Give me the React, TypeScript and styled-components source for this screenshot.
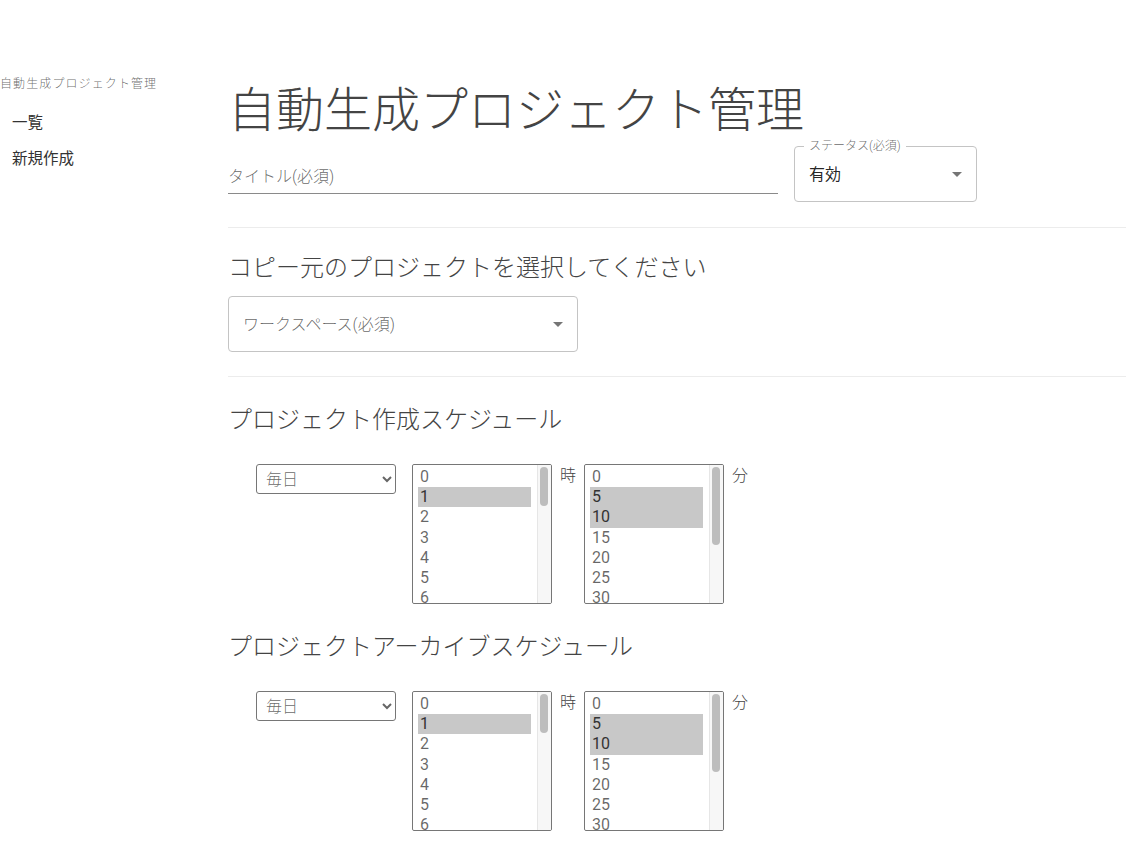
import styled, { createGlobalStyle } from "styled-components";

const GlobalStyle = createGlobalStyle`
  body {
    margin: 0;
    background: #fff;
    font-family: Roboto, "Noto Sans CJK JP", sans-serif;
    font-weight: 300;
    color: rgba(0, 0, 0, 0.87);
  }
`;

const hours = Array.from({ length: 24 }, (_, i) => String(i));
const minutes = Array.from({ length: 12 }, (_, i) => String(i * 5));

const ArrowDrop = () => (
  <svg width="24" height="24" viewBox="0 0 24 24">
    <path d="M7 10l5 5 5-5z" fill="rgba(0,0,0,0.54)" />
  </svg>
);

// 複数選択リスト。スクロールバーはヘッドレスだと出ないので自前で描く
const MultiList = ({ items, selected }: { items: string[]; selected: string[] }) => {
  const thumb = Math.round((7 / items.length) * 134);
  return (
    <ListFrame>
      <ListBox multiple size={7} defaultValue={selected}>
        {items.map((v) => (
          <option key={v} value={v}>
            {v}
          </option>
        ))}
      </ListBox>
      <ScrollTrack>
        <ScrollThumb style={{ height: thumb }} />
      </ScrollTrack>
    </ListFrame>
  );
};

const Schedule = ({ title }: { title: string }) => (
  <>
    <SectionTitle $top={27}>{title}</SectionTitle>
    <ScheduleRow>
      <Frequency defaultValue="daily">
        <option value="daily">毎日</option>
        <option value="weekly">毎週</option>
        <option value="monthly">毎月</option>
      </Frequency>
      <MultiList items={hours} selected={["1"]} />
      <Unit>時</Unit>
      <MultiList items={minutes} selected={["5", "10"]} />
      <Unit>分</Unit>
    </ScheduleRow>
  </>
);

const App = () => {
  return (
    <Page>
      <GlobalStyle />
      <Sidebar>
        <SideTitle>自動生成プロジェクト管理</SideTitle>
        <NavList>
          <NavItem>一覧</NavItem>
          <NavItem>新規作成</NavItem>
        </NavList>
      </Sidebar>
      <Main>
        <PageTitle>自動生成プロジェクト管理</PageTitle>
        <FormRow>
          <TextField>
            <Placeholder>タイトル(必須)</Placeholder>
          </TextField>
          <Outlined $width={183}>
            <FloatLabel>ステータス(必須)</FloatLabel>
            <SelectValue>有効</SelectValue>
            <ArrowDrop />
          </Outlined>
        </FormRow>
        <Divider $top={25} />
        <SectionTitle $top={24}>コピー元のプロジェクトを選択してください</SectionTitle>
        <Outlined $width={350} style={{ marginTop: 12 }}>
          <SelectValue $muted>ワークスペース(必須)</SelectValue>
          <ArrowDrop />
        </Outlined>
        <Divider $top={24} />
        <Schedule title="プロジェクト作成スケジュール" />
        <Schedule title="プロジェクトアーカイブスケジュール" />
      </Main>
    </Page>
  );
};

const Page = styled.div`
  display: flex;
  min-height: 844px;
`;

const Sidebar = styled.nav`
  width: 228px;
  flex-shrink: 0;
  padding-top: 76px;
`;

const SideTitle = styled.div`
  font-size: 12px;
  letter-spacing: 1.1px;
  color: rgba(0, 0, 0, 0.6);
  line-height: 16px;
`;

const NavList = styled.ul`
  list-style: none;
  margin: 13px 0 0;
  padding: 0;
`;

const NavItem = styled.li`
  padding: 6px 12px;
  font-size: 15.5px;
  font-weight: 400;
  line-height: 24px;
  color: #333;
`;

const Main = styled.main`
  flex: 1;
  padding-top: 81px;
  padding-bottom: 40px;
`;

const PageTitle = styled.h1`
  margin: 0;
  font-size: 48px;
  font-weight: 300;
  line-height: 60px;
  color: #444;
`;

const FormRow = styled.div`
  display: flex;
  align-items: flex-start;
  gap: 16px;
  margin-top: 5px;
`;

const TextField = styled.div`
  width: 550px;
  height: 48px;
  box-sizing: border-box;
  border-bottom: 1px solid #8a8a8a;
  display: flex;
  align-items: flex-end;
  padding-bottom: 5px;
`;

const Placeholder = styled.span`
  font-size: 16px;
  line-height: 23px;
  color: rgba(0, 0, 0, 0.6);
`;

const Outlined = styled.div<{ $width: number }>`
  position: relative;
  width: ${(p) => p.$width}px;
  height: 56px;
  box-sizing: border-box;
  border: 1px solid #c4c4c4;
  border-radius: 4px;
  display: flex;
  align-items: center;
  justify-content: space-between;
  padding: 0 7px 0 14px;
`;

const FloatLabel = styled.span`
  position: absolute;
  top: -9px;
  left: 9px;
  padding: 0 5px;
  background: #fff;
  font-size: 12px;
  line-height: 16px;
  color: rgba(0, 0, 0, 0.6);
`;

const SelectValue = styled.span<{ $muted?: boolean }>`
  font-size: 16px;
  font-weight: ${(p) => (p.$muted ? 300 : 400)};
  margin-top: -2px;
  color: ${(p) => (p.$muted ? "rgba(0, 0, 0, 0.6)" : "rgba(0, 0, 0, 0.87)")};
`;

const Divider = styled.hr<{ $top: number }>`
  margin: ${(p) => p.$top}px 0 0;
  border: none;
  border-top: 1px solid #ececec;
`;

const SectionTitle = styled.h2<{ $top: number }>`
  margin: ${(p) => p.$top}px 0 0;
  font-size: 24px;
  font-weight: 300;
  line-height: 32px;
  color: #444;
`;

const ScheduleRow = styled.div`
  display: flex;
  align-items: flex-start;
  gap: 8px;
  margin: 28px 0 0 28px;
`;

const Frequency = styled.select`
  width: 140px;
  height: 30px;
  margin-right: 8px;
  font-family: Roboto, "Noto Sans CJK JP", sans-serif;
  font-weight: 300;
  font-size: 16px;
  color: rgba(0, 0, 0, 0.6);
  background: #fff;
  border: 1px solid #767676;
  border-radius: 3px;
  padding: 0 4px 0 5px;
`;

const ListFrame = styled.div`
  display: flex;
  width: 140px;
  height: 140px;
  box-sizing: border-box;
  border: 1px solid #767676;
  border-radius: 2px;
  overflow: hidden;
`;

const ListBox = styled.select`
  flex: 1;
  min-width: 0;
  height: 100%;
  box-sizing: border-box;
  font-family: Roboto, "Noto Sans CJK JP", sans-serif;
  font-weight: 300;
  font-size: 16px;
  color: rgba(0, 0, 0, 0.6);
  border: none;
  outline: none;
  padding: 2px 6px 0 5px;
  scrollbar-width: none;

  option {
    padding: 0 2px 1px;
  }

  option:checked {
    background: #c8c8c8;
    color: #333;
  }
`;

const ScrollTrack = styled.div`
  width: 14px;
  flex-shrink: 0;
  box-sizing: border-box;
  background: #f7f7f7;
  border-left: 1px solid #e6e6e6;
  padding: 2px 3px 0 2px;
`;

const ScrollThumb = styled.div`
  width: 8px;
  background: #bdbdbd;
  border-radius: 4px;
`;

const Unit = styled.span`
  font-size: 16px;
  line-height: 24px;
  color: #444;
`;

export default App;
